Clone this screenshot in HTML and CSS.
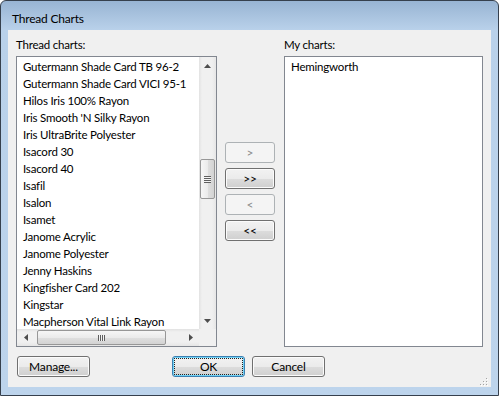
FILE: index.html
```html
<!DOCTYPE html>
<html lang="en">

<head>
	<meta charset="UTF-8" />
	<title>Thread Charts</title>
	<link rel="stylesheet" href="styles.css">
</head>

<body>
	<div class="window">
		<div class="titlebar">Thread Charts</div>

		<div class="client">
			<div class="panes">
				<!-- available charts -->
				<div class="col-left">
					<div class="label">Thread charts:</div>
					<div class="listbox listbox-left">
						<ul class="items">
							<li>Gutermann Shade Card TB 96-2</li>
							<li>Gutermann Shade Card VICI 95-1</li>
							<li>Hilos Iris 100% Rayon</li>
							<li>Iris Smooth 'N Silky Rayon</li>
							<li>Iris UltraBrite Polyester</li>
							<li>Isacord 30</li>
							<li>Isacord 40</li>
							<li>Isafil</li>
							<li>Isalon</li>
							<li>Isamet</li>
							<li>Janome Acrylic</li>
							<li>Janome Polyester</li>
							<li>Jenny Haskins</li>
							<li>Kingfisher Card 202</li>
							<li>Kingstar</li>
							<li>Macpherson Vital Link Rayon</li>
						</ul>

						<div class="vscroll">
							<div class="arrow-btn">
								<svg width="7" height="4" viewBox="0 0 7 4"><polygon points="3.5,0 7,4 0,4" fill="#4d4d4d" /></svg>
							</div>
							<div class="track">
								<div class="vthumb"><span class="vgrip"></span></div>
							</div>
							<div class="arrow-btn">
								<svg width="7" height="4" viewBox="0 0 7 4"><polygon points="0,0 7,0 3.5,4" fill="#4d4d4d" /></svg>
							</div>
						</div>

						<div class="hscroll">
							<div class="arrow-btn">
								<svg width="4" height="7" viewBox="0 0 4 7"><polygon points="4,0 4,7 0,3.5" fill="#4d4d4d" /></svg>
							</div>
							<div class="track">
								<div class="hthumb"><span class="hgrip"></span></div>
							</div>
							<div class="arrow-btn">
								<svg width="4" height="7" viewBox="0 0 4 7"><polygon points="0,0 4,3.5 0,7" fill="#4d4d4d" /></svg>
							</div>
						</div>
						<div class="corner"></div>
					</div>
				</div>

				<!-- move buttons -->
				<div class="col-mid">
					<button class="btn" disabled>&gt;</button>
					<button class="btn">&gt;&gt;</button>
					<button class="btn" disabled>&lt;</button>
					<button class="btn">&lt;&lt;</button>
				</div>

				<!-- selected charts -->
				<div class="col-right">
					<div class="label">My charts:</div>
					<div class="listbox">
						<ul class="items">
							<li>Hemingworth</li>
						</ul>
					</div>
				</div>
			</div>

			<div class="footer">
				<button class="btn btn-wide btn-manage">Manage...</button>
				<button class="btn btn-wide btn-ok">OK</button>
				<button class="btn btn-wide btn-cancel">Cancel</button>
				<svg class="grip" width="8" height="8" viewBox="0 0 8 8">
					<g fill="#fff">
						<rect x="7" y="1" width="1" height="1" />
						<rect x="4" y="4" width="1" height="1" />
						<rect x="7" y="4" width="1" height="1" />
						<rect x="1" y="7" width="1" height="1" />
						<rect x="4" y="7" width="1" height="1" />
						<rect x="7" y="7" width="1" height="1" />
					</g>
					<g fill="#a3a3a3">
						<rect x="6" y="0" width="1" height="1" />
						<rect x="3" y="3" width="1" height="1" />
						<rect x="6" y="3" width="1" height="1" />
						<rect x="0" y="6" width="1" height="1" />
						<rect x="3" y="6" width="1" height="1" />
						<rect x="6" y="6" width="1" height="1" />
					</g>
				</svg>
			</div>
		</div>
	</div>
</body>

</html>
```

FILE: styles.css
```css
body {
	margin: 0;
	font-family: Lato, "Noto Sans", Arial, sans-serif;
	font-size: 11.5px;
	letter-spacing: -0.2px;
	color: #000;
}

.window {
	width: 499px;
	height: 396px;
	box-sizing: border-box;
	border: 1px solid #36404d;
	border-radius: 6px 6px 0 0;
	background: linear-gradient(#98b4d3, #b9d1ea 29px, #bdd4ec);
	display: flex;
	flex-direction: column;
	overflow: hidden;
}

.titlebar {
	height: 29px;
	box-sizing: border-box;
	padding: 10px 0 0 11px;
	line-height: 16px;
	font-size: 12px;
}

.client {
	flex: 1;
	margin: 0 7px 8px;
	padding: 6px 8px 0;
	background: #f0f0f0;
	display: flex;
	flex-direction: column;
}

.panes {
	display: flex;
}

.col-left {
	width: 201px;
}

.col-mid {
	width: 50px;
	margin: 0 9px 0 8px;
	padding-top: 106px;
	display: flex;
	flex-direction: column;
	gap: 5px;
}

.col-right {
	width: 199px;
}

.label {
	height: 15px;
	line-height: 15px;
	margin-bottom: 5px;
	padding-top: 1px;
	box-sizing: border-box;
}

.listbox {
	height: 291px;
	box-sizing: border-box;
	border: 1px solid #828790;
	background: #fff;
	overflow: hidden;
}

.listbox-left {
	display: grid;
	grid-template-columns: 182px 17px;
	grid-template-rows: 272px 17px;
}

.items {
	list-style: none;
	margin: 0;
	padding: 1px 0 0;
	overflow: hidden;
}

.items li {
	height: 17px;
	line-height: 17px;
	padding-left: 6px;
	white-space: nowrap;
}

/* scrollbars */
.vscroll {
	display: flex;
	flex-direction: column;
	background: linear-gradient(to right, #e2e2e2, #f0f0f0 3px, #f0f0f0 13px, #e6e6e6);
}

.hscroll {
	display: flex;
	background: linear-gradient(#e2e2e2, #f0f0f0 3px, #f0f0f0 13px, #e6e6e6);
}

.arrow-btn {
	flex: 0 0 17px;
	height: 17px;
	display: flex;
	align-items: center;
	justify-content: center;
}

.arrow-btn svg {
	display: block;
}

.track {
	flex: 1;
}

.vscroll .track {
	display: flex;
	flex-direction: column;
}

.hscroll .track {
	display: flex;
}

.vthumb {
	margin: 85px 1px 0;
	height: 40px;
	box-sizing: border-box;
	border: 1px solid #979797;
	border-radius: 2px;
	background: linear-gradient(to right, #f6f6f6, #ebebeb 50%, #dedede 55%, #d3d3d3);
	display: flex;
	align-items: center;
	justify-content: center;
}

.vgrip {
	width: 7px;
	height: 7px;
	background: repeating-linear-gradient(#5f5f5f 0 1px, #f4f4f4 1px 2px);
}

.hthumb {
	margin: 1px 0 1px 3px;
	width: 129px;
	box-sizing: border-box;
	border: 1px solid #979797;
	border-radius: 2px;
	background: linear-gradient(#f6f6f6, #ebebeb 50%, #dedede 55%, #d3d3d3);
	display: flex;
	align-items: center;
	justify-content: center;
}

.hgrip {
	width: 7px;
	height: 6px;
	background: repeating-linear-gradient(to right, #5f5f5f 0 1px, #f4f4f4 1px 2px);
}

.corner {
	background: #f0f0f0;
}

/* buttons */
.btn {
	height: 21px;
	box-sizing: border-box;
	border: 1px solid #707070;
	border-radius: 3px;
	background: linear-gradient(#f2f2f2, #ebebeb 50%, #dddddd 50%, #cfcfcf);
	box-shadow: inset 0 0 0 1px #fbfbfb;
	font-family: inherit;
	font-size: 12px;
	letter-spacing: inherit;
	line-height: 17px;
	padding: 0;
	color: #000;
	text-align: center;
}

.btn:disabled {
	border-color: #adb2b5;
	background: #f4f4f4;
	box-shadow: none;
	color: #8b8b8b;
}

.footer {
	display: flex;
	align-items: flex-start;
	margin-top: 9px;
}

.btn-wide {
	width: 73px;
}

.btn-manage {
	margin-left: 1px;
}

.btn-ok {
	position: relative;
	margin-left: 82px;
	border-color: #3c7fb1;
	box-shadow: inset 0 0 0 1px #6fd3f7;
}

.btn-ok::after {
	content: "";
	position: absolute;
	inset: 1px;
	border: 1px dotted #222;
}

.btn-cancel {
	margin-left: 7px;
}

.grip {
	display: block;
	margin: 22px -5px 0 auto;
}
```
